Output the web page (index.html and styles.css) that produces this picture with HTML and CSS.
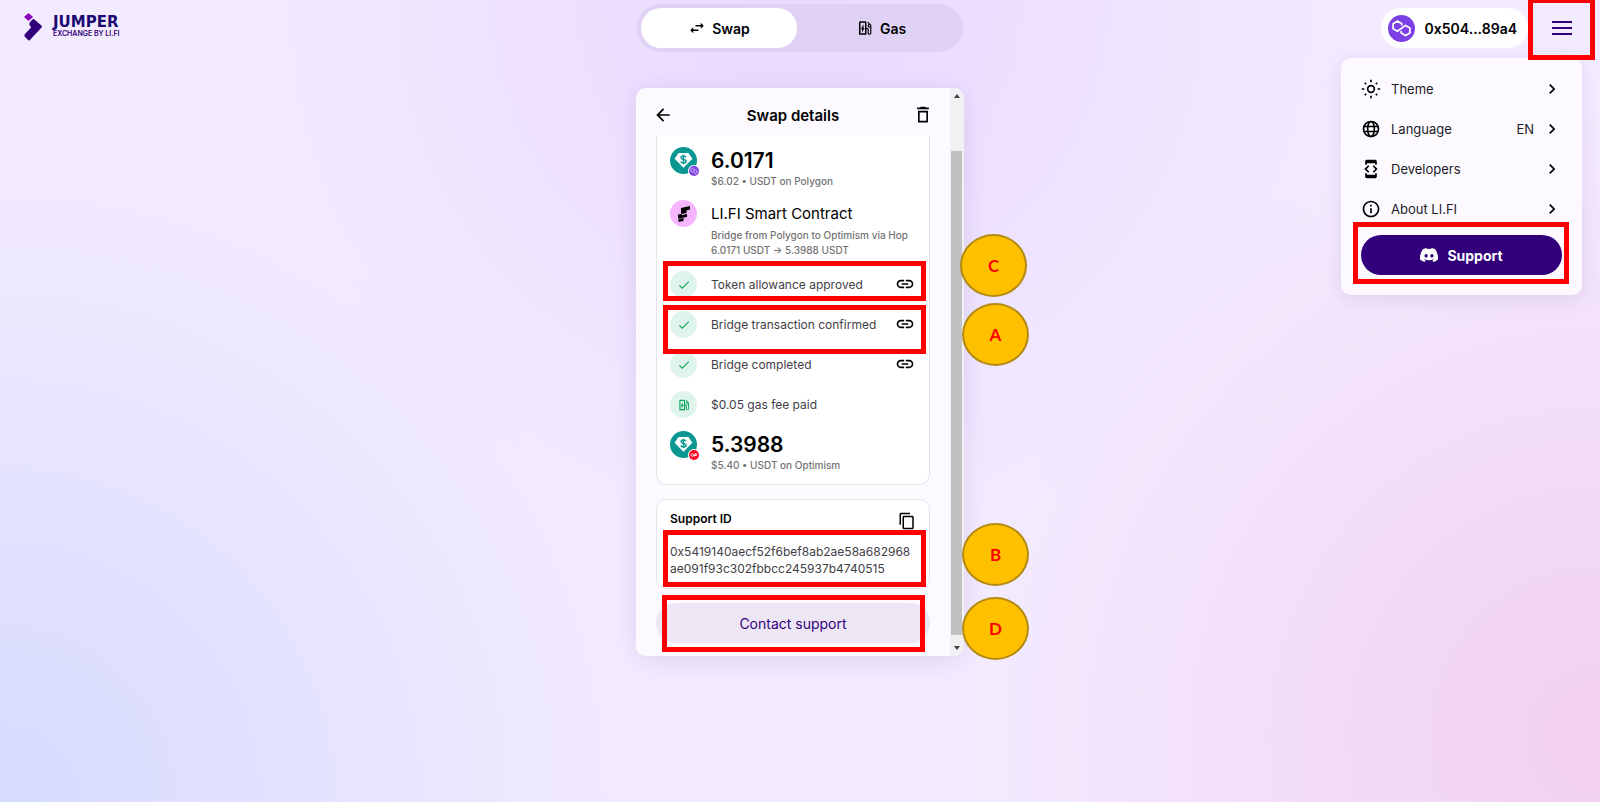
FILE: index.html
```
<!DOCTYPE html>
<html lang="en">
<head>
    <meta charset="UTF-8">
    <meta name="viewport" content="width=device-width, initial-scale=1.0">
    <title>Jumper Exchange</title>
    <link rel="stylesheet" href="styles.css">
</head>
<body>
    <!-- shared icons -->
    <svg class="sprite" aria-hidden="true">
        <symbol id="i-link" viewBox="0 0 24 24"><path d="M3.9 12c0-1.71 1.39-3.1 3.1-3.1h4V7H7c-2.76 0-5 2.24-5 5s2.24 5 5 5h4v-1.9H7c-1.71 0-3.1-1.39-3.1-3.1zM8 13h8v-2H8v2zm9-6h-4v1.9h4c1.71 0 3.1 1.39 3.1 3.1s-1.39 3.1-3.1 3.1h-4V17h4c2.76 0 5-2.24 5-5s-2.24-5-5-5z"/></symbol>
        <symbol id="i-check" viewBox="0 0 24 24"><path d="M9 16.17 4.83 12l-1.42 1.41L9 19 21 7l-1.41-1.41z"/></symbol>
        <symbol id="i-chevron" viewBox="0 0 24 24"><path d="M10 6 8.59 7.41 13.17 12l-4.58 4.59L10 18l6-6z"/></symbol>
        <symbol id="i-gas" viewBox="0 0 24 24"><path d="m19.77 7.23.01-.01-3.72-3.72L15 4.56l2.11 2.11c-.94.36-1.61 1.26-1.61 2.33 0 1.38 1.12 2.5 2.5 2.5.36 0 .69-.08 1-.21v7.21c0 .55-.45 1-1 1s-1-.45-1-1V14c0-1.1-.9-2-2-2h-1V5c0-1.1-.9-2-2-2H6c-1.1 0-2 .9-2 2v16h10v-7.5h1.5v5c0 1.38 1.12 2.5 2.5 2.5s2.5-1.12 2.5-2.5V9c0-.69-.28-1.32-.73-1.77zM12 19H6V5h6v14zm6-9c-.55 0-1-.45-1-1s.45-1 1-1 1 .45 1 1-.45 1-1 1zM8 18v-4.5H6.5L10 7v5h1.5L8 18z"/></symbol>
        <symbol id="i-polygon" viewBox="0 0 28 28"><circle cx="14" cy="14" r="14" fill="#7b3fe4"/><path d="M14.3 11V9L9.8 6.3 5.3 9v5.2l4.5 2.6 8.4-6 4.5 2.6v5.2l-4.5 2.7-4.5-2.7v-2" fill="none" stroke="#fff" stroke-width="1.8" stroke-linejoin="round"/></symbol>
        <symbol id="i-usdt" viewBox="0 0 28 28"><circle cx="14" cy="14" r="14" fill="#0a9691"/><path d="M8.8 6.2h10.4l4 6L14 21.5l-9.2-9.3z" fill="#fff"/><path d="M16.6 10.500c-.5-1-1.500-1.200-2.700-1.200-1.300 0-2.400.6-2.400 1.800 0 2.600 5.300 1.100 5.300 3.700 0 1.200-1.200 1.800-2.600 1.800-1.500 0-2.600-.5-3-1.600M14 8v10" fill="none" stroke="#0a9691" stroke-width="1.5"/></symbol>
    </svg>

    <header class="topbar">
        <a href="#" class="logo">
            <svg width="18" height="28" viewBox="0 0 18 28"><path d="M4.500 1 8 4 4.500 7 1 4z" fill="#8700b8" stroke="#8700b8" stroke-width="1.500" stroke-linejoin="round"/><path d="m9.500 7 7.500 6.500-12 13L1.500 23v-1l7-7.500L6.500 12v-2z" fill="#31007a" stroke="#31007a" stroke-width="2" stroke-linejoin="round"/></svg>
            <span class="logo-text"><span class="logo-name">JUMPER</span><span class="logo-sub">EXCHANGE BY LI.FI</span></span>
        </a>

        <nav class="tabs">
            <button class="tab active">
                <svg class="tab-icon" viewBox="0 0 24 24"><path d="M6.990 11 3 15l3.990 4v-3H14v-2H6.990v-3zM21 9l-3.990-4v3H10v2h7.010v3L21 9z"/></svg>
                Swap
            </button>
            <button class="tab">
                <svg class="tab-icon" viewBox="0 0 24 24"><use href="#i-gas"/></svg>
                Gas
            </button>
        </nav>

        <div class="account">
            <button class="wallet">
                <svg width="27" height="27"><use href="#i-polygon"/></svg>
                0x504...89a4
            </button>
            <button class="burger" aria-label="Menu"><span></span><span></span><span></span></button>

            <div class="menu">
                <a href="#" class="menu-item">
                    <svg viewBox="0 0 24 24"><circle cx="12" cy="12" r="4" fill="none" stroke="#000" stroke-width="2"/><path d="M12 1v3M12 20v3M1 12h3M20 12h3M4.500 4.500l1.800 1.800M17.700 17.700l1.800 1.800M4.500 19.500l1.800-1.800M17.700 6.300l1.800-1.800" stroke="#000" stroke-width="2"/></svg>
                    <span>Theme</span>
                    <svg class="chevron"><use href="#i-chevron"/></svg>
                </a>
                <a href="#" class="menu-item">
                    <svg viewBox="0 0 24 24"><g fill="none" stroke="#000" stroke-width="2"><circle cx="12" cy="12" r="9"/><ellipse cx="12" cy="12" rx="4" ry="9"/><path d="M3.500 9h17M3.500 15h17"/></g></svg>
                    <span>Language</span>
                    <span class="value">EN</span>
                    <svg class="chevron"><use href="#i-chevron"/></svg>
                </a>
                <a href="#" class="menu-item">
                    <svg viewBox="0 0 24 24"><path d="M7 5h10v2h2V3c0-1.100-.9-1.990-2-1.990L7 1c-1.100 0-2 .9-2 2v4h2V5zm8.410 11.590L20 12l-4.590-4.590L14 8.830 17.170 12 14 15.170l1.410 1.420zM10 15.170 6.830 12 10 8.830 8.590 7.410 4 12l4.590 4.590L10 15.170zM17 19H7v-2H5v4c0 1.100.9 2 2 2h10c1.100 0 2-.9 2-2v-4h-2v2z"/></svg>
                    <span>Developers</span>
                    <svg class="chevron"><use href="#i-chevron"/></svg>
                </a>
                <a href="#" class="menu-item">
                    <svg viewBox="0 0 24 24"><path d="M11 7h2v2h-2zm0 4h2v6h-2zm1-9C6.480 2 2 6.480 2 12s4.480 10 10 10 10-4.480 10-10S17.520 2 12 2zm0 18c-4.410 0-8-3.590-8-8s3.590-8 8-8 8 3.590 8 8-3.590 8-8 8z"/></svg>
                    <span>About LI.FI</span>
                    <svg class="chevron"><use href="#i-chevron"/></svg>
                </a>
                <button class="support-btn">
                    <svg width="18" height="14" viewBox="0 0 18 14"><path fill="#fff" fill-rule="evenodd" d="M15.200 1.200A15 15 0 0 0 11.500 0l-.5 1a14 14 0 0 0-4 0L6.500 0c-1.300.2-2.500.6-3.700 1.200C.5 4.700-.2 8.200 0 11.600A15 15 0 0 0 4.600 14l1-1.600-1.600-.8.4-.3c3 1.400 6.200 1.400 9.200 0l.4.3-1.600.8 1 1.600a15 15 0 0 0 4.600-2.400c.3-4-.7-7.400-2.800-10.400zM6.100 9.500c-.9 0-1.600-.8-1.600-1.800s.7-1.800 1.600-1.800 1.600.8 1.600 1.800-.7 1.800-1.600 1.800zm5.800 0c-.9 0-1.600-.8-1.600-1.800s.7-1.800 1.600-1.800 1.600.8 1.600 1.800-.7 1.800-1.600 1.800z"/></svg>
                    Support
                </button>
                <div class="mark mark-support"></div>
            </div>
            <div class="mark mark-burger"></div>
        </div>
    </header>

    <main class="widget">
        <div class="panel">
            <div class="content">
                <div class="panel-head">
                    <button class="icon-btn" aria-label="Back"><svg width="20" height="20" viewBox="0 0 24 24"><path d="M20 11H7.830l5.590-5.590L12 4l-8 8 8 8 1.410-1.410L7.830 13H20v-2z"/></svg></button>
                    <h1>Swap details</h1>
                    <button class="icon-btn" aria-label="Delete"><svg width="20" height="20" viewBox="0 0 24 24"><path d="M6 21h12V7H6v14zM8 9h8v10H8V9zm7.500-6-1-1h-5l-1 1H5v2h14V3z"/></svg></button>
                </div>

                <section class="card steps">
                    <div class="step token">
                        <div class="avatar">
                            <svg width="27" height="27"><use href="#i-usdt"/></svg>
                            <span class="chain"><svg width="10" height="10"><use href="#i-polygon"/></svg></span>
                        </div>
                        <div>
                            <p class="amount">6.0171</p>
                            <p class="caption">$6.02 • USDT on Polygon</p>
                        </div>
                    </div>
                    <div class="step contract">
                        <div class="avatar lifi">
                            <svg width="14" height="16" viewBox="0 0 14 16"><path d="m4 2 9-2v3.500L9.500 4.500V7L4 8zM1 8.500l3-.5 1 1 5-1v3L1 12.500zM1.500 13l5-1v3l-5 1z"/></svg>
                        </div>
                        <div>
                            <p class="title">LI.FI Smart Contract</p>
                            <p class="caption">Bridge from Polygon to Optimism via Hop</p>
                            <p class="caption">6.0171 USDT → 5.3988 USDT</p>
                        </div>
                    </div>
                    <div class="step">
                        <div class="avatar done"><svg width="14" height="14"><use href="#i-check"/></svg></div>
                        <p>Token allowance approved</p>
                        <a href="#" class="tx" aria-label="View transaction"><svg width="20" height="20"><use href="#i-link"/></svg></a>
                    </div>
                    <div class="step">
                        <div class="avatar done"><svg width="14" height="14"><use href="#i-check"/></svg></div>
                        <p>Bridge transaction confirmed</p>
                        <a href="#" class="tx" aria-label="View transaction"><svg width="20" height="20"><use href="#i-link"/></svg></a>
                    </div>
                    <div class="step">
                        <div class="avatar done"><svg width="14" height="14"><use href="#i-check"/></svg></div>
                        <p>Bridge completed</p>
                        <a href="#" class="tx" aria-label="View transaction"><svg width="20" height="20"><use href="#i-link"/></svg></a>
                    </div>
                    <div class="step">
                        <div class="avatar done"><svg width="14" height="14"><use href="#i-gas"/></svg></div>
                        <p>$0.05 gas fee paid</p>
                    </div>
                    <div class="step token">
                        <div class="avatar">
                            <svg width="27" height="27"><use href="#i-usdt"/></svg>
                            <span class="chain"><svg width="10" height="10" viewBox="0 0 20 20"><circle cx="10" cy="10" r="10" fill="#ff0420"/><path d="M6.500 7.500c-3 0-4 5 0 5s4-5 0-5zM11 13l1-5.500h2.500c2 0 2 3.500-.5 3.500h-2.500" fill="none" stroke="#fff" stroke-width="2"/></svg></span>
                        </div>
                        <div>
                            <p class="amount">5.3988</p>
                            <p class="caption">$5.40 • USDT on Optimism</p>
                        </div>
                    </div>
                </section>

                <section class="card support-id">
                    <div class="support-head">
                        <h2>Support ID</h2>
                        <button class="icon-btn" aria-label="Copy"><svg width="18" height="18" viewBox="0 0 24 24"><path d="M16 1H4c-1.100 0-2 .9-2 2v14h2V3h12V1zm3 4H8c-1.100 0-2 .9-2 2v14c0 1.100.9 2 2 2h11c1.100 0 2-.9 2-2V7c0-1.100-.9-2-2-2zm0 16H8V7h11v14z"/></svg></button>
                    </div>
                    <p class="hash">0x5419140aecf52f6bef8ab2ae58a682968ae091f93c302fbbcc245937b4740515</p>
                </section>

                <button class="contact-btn">Contact support</button>
            </div>
            <div class="scrollbar">
                <svg width="6" height="4" viewBox="0 0 6 4"><path d="M3 0l3 4H0z"/></svg>
                <div class="thumb"></div>
                <svg width="6" height="4" viewBox="0 0 6 4"><path d="M0 0h6L3 4z"/></svg>
            </div>
        </div>

        <!-- guide marks -->
        <div class="mark mark-c"></div>
        <div class="mark mark-a"></div>
        <div class="mark mark-b"></div>
        <div class="mark mark-d"></div>
        <span class="badge badge-c">C</span>
        <span class="badge badge-a">A</span>
        <span class="badge badge-b">B</span>
        <span class="badge badge-d">D</span>
    </main>
</body>
</html>
```
FILE: styles.css
```
* {
    box-sizing: border-box;
}
body {
    margin: 0;
    min-height: 100vh;
    font-family: Inter, "Liberation Sans", sans-serif;
    font-size: 13px;
    color: #000;
    background:
        radial-gradient(circle at 0% 100%, #d6dbff 0, rgba(214, 219, 255, 0) 36%),
        radial-gradient(circle at 100% 92%, #f2d0ee 0, rgba(242, 208, 238, 0) 36%),
        radial-gradient(circle at 50% 0%, #e9d9ff 0, rgba(233, 217, 255, 0) 50%),
        #f3ebff;
}
h1, h2, p {
    margin: 0;
}
button {
    font-family: inherit;
    border: none;
    background: none;
    padding: 0;
    color: inherit;
    cursor: pointer;
}
a {
    color: inherit;
    text-decoration: none;
}
svg {
    display: block;
    flex: none;
}
.sprite {
    position: absolute;
    width: 0;
    height: 0;
}

/* top bar */
.topbar {
    display: grid;
    grid-template-columns: 1fr 326px 1fr;
    align-items: start;
    height: 56px;
    padding: 4px 18px 0 24px;
}
.logo {
    display: flex;
    align-items: center;
    gap: 11px;
    padding-top: 9px;
    color: #1b0a70;
}
.logo-text {
    display: flex;
    flex-direction: column;
}
.logo-name {
    font: bold 15px/14px "DejaVu Sans", sans-serif;
}
.logo-sub {
    font-size: 7px;
    line-height: 10px;
    font-weight: 600;
    color: #31007a;
}
.tabs {
    display: grid;
    grid-template-columns: 1fr 1fr;
    gap: 6px;
    height: 48px;
    padding: 4px;
    margin-left: -3px;
    margin-right: 3px;
    border-radius: 24px;
    background: #e0d2f5;
}
.tab {
    display: flex;
    align-items: center;
    justify-content: center;
    gap: 6px;
    border-radius: 20px;
    font-size: 14px;
    font-weight: 600;
}
.tab.active {
    background: #fff;
}
.tab-icon {
    width: 18px;
    height: 18px;
}
.account {
    position: relative;
    display: flex;
    justify-content: flex-end;
    align-items: center;
    gap: 24px;
    height: 48px;
    padding-right: 10px;
}
.wallet {
    display: flex;
    align-items: center;
    gap: 10px;
    height: 40px;
    padding: 0 11px 0 7px;
    border-radius: 20px;
    background: #fff;
    font-size: 14px;
    font-weight: 600;
}
.burger {
    display: flex;
    flex-direction: column;
    gap: 4px;
    width: 20px;
}
.burger span {
    height: 2px;
    background: #31007a;
}

/* menu */
.menu {
    position: absolute;
    top: 54px;
    right: 0;
    width: 241px;
    padding: 11px 20px 20px;
    border-radius: 10px;
    background: #fcfaff;
    box-shadow: 0 4px 20px rgba(70, 30, 130, 0.1);
}
.menu-item {
    display: flex;
    align-items: center;
    height: 40px;
    font-size: 13px;
    color: #1c1b1f;
}
.menu-item svg {
    width: 20px;
    height: 20px;
    margin-right: 10px;
}
.menu-item .value {
    margin-left: auto;
    margin-right: 8px;
}
.menu-item svg.chevron {
    margin-left: auto;
    margin-right: 0;
}
.menu-item .value + svg.chevron {
    margin-left: 0;
}
.support-btn {
    display: flex;
    align-items: center;
    justify-content: center;
    gap: 9px;
    width: 100%;
    height: 40px;
    margin-top: 6px;
    border-radius: 20px;
    background: #31007a;
    color: #fff;
    font-size: 14px;
    font-weight: 700;
}

/* widget */
.widget {
    position: relative;
    width: 328px;
    margin: 32px auto 0;
}
.panel {
    display: flex;
    border-radius: 10px;
    overflow: hidden;
    background: #fcfaff;
    box-shadow: 0 4px 24px rgba(70, 30, 130, 0.12);
}
.content {
    flex: 1;
    padding: 0 20px 13px;
}
.panel-head {
    display: flex;
    align-items: center;
    justify-content: space-between;
    height: 47px;
    padding-top: 7px;
    margin: 0 -3px;
}
.panel-head h1 {
    font-size: 15px;
    font-weight: 600;
}
.card {
    border: 1px solid #e6e4ea;
    border-radius: 10px;
    background: #fff;
}
.steps {
    border-top: none;
    border-radius: 0 0 10px 10px;
    padding: 12px 14px 0 13px;
}
.step {
    display: flex;
    height: 40px;
    color: #424047;
    font-size: 12px;
    line-height: 27px;
}
.step.token {
    height: 53px;
}
.step.contract {
    height: 71px;
}
.avatar {
    position: relative;
    display: flex;
    align-items: center;
    justify-content: center;
    flex: none;
    width: 27px;
    height: 27px;
    margin-right: 14px;
    border-radius: 50%;
}
.avatar.lifi {
    background: #f5b5ff;
}
.avatar.done {
    background: #dff4ea;
    fill: #0aa65b;
}
.chain {
    position: absolute;
    right: -3px;
    bottom: -3px;
    padding: 1px;
    border-radius: 50%;
    background: #fff;
}
.amount {
    font-size: 21px;
    font-weight: 600;
    line-height: 27px;
    color: #000;
}
.title {
    font-size: 15px;
    line-height: 28px;
    color: #000;
}
.caption {
    font-size: 10px;
    font-weight: 500;
    line-height: 15px;
    color: #747474;
}
.tx {
    margin-left: auto;
    padding-top: 3px;
}
.support-id {
    margin-top: 14px;
    padding: 11px 13px;
}
.support-head {
    display: flex;
    justify-content: space-between;
    height: 32px;
}
.support-head h2 {
    font-size: 12px;
    font-weight: 600;
    line-height: 16px;
}
.support-head .icon-btn {
    align-self: flex-start;
    padding-top: 1px;
}
.hash {
    font-size: 12px;
    line-height: 17px;
    word-break: break-all;
    color: #424047;
}
.contact-btn {
    width: 100%;
    height: 40px;
    margin-top: 14px;
    border-radius: 20px;
    background: #ece6f5;
    color: #31007a;
    font-size: 14px;
}
.scrollbar {
    display: flex;
    flex-direction: column;
    align-items: center;
    width: 14px;
    padding: 6px 1px 6px 0;
    background: #f1f0f2;
    fill: #444;
}
.thumb {
    flex: 1;
    width: 11px;
    margin: 53px 0 11px;
    background: #c1c1c1;
}

/* guide marks */
.mark {
    position: absolute;
    border: 5px solid #f00;
    pointer-events: none;
}
.mark-burger {
    top: -6px;
    right: -13px;
    width: 67px;
    height: 62px;
}
.mark-support {
    top: 164px;
    left: 12px;
    width: 216px;
    height: 62px;
}
.mark-a, .mark-b, .mark-c, .mark-d {
    left: 27px;
    width: 263px;
}
.mark-c {
    top: 173px;
    height: 40px;
}
.mark-a {
    top: 217px;
    height: 49px;
}
.mark-b {
    top: 442px;
    height: 57px;
}
.mark-d {
    top: 507px;
    left: 26px;
    height: 57px;
}
.badge {
    position: absolute;
    left: 326px;
    display: flex;
    align-items: center;
    justify-content: center;
    width: 67px;
    height: 63px;
    border: 2px solid #b38a12;
    border-radius: 50%;
    background: #ffc000;
    color: #f00;
    font: bold 17px Lato, sans-serif;
}
.badge-c {
    top: 146px;
    left: 324px;
}
.badge-a {
    top: 215px;
}
.badge-b {
    top: 435px;
}
.badge-d {
    top: 509px;
}
```
